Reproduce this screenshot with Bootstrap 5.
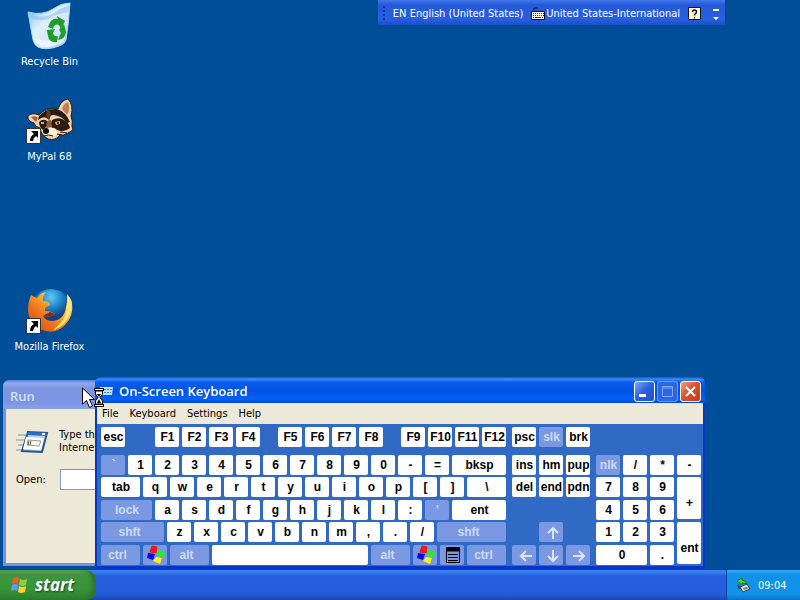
<!DOCTYPE html>
<html lang="en">
<head>
    <meta charset="UTF-8">
    <meta name="viewport" content="width=device-width, initial-scale=1.0">
    <title>Desktop</title>
    <link href="https://cdn.jsdelivr.net/npm/bootstrap@5.3.0/dist/css/bootstrap.min.css" rel="stylesheet">
    <style>
        body {
            background: #004e98;
            color: #000;
            font: 11px/13px "DejaVu Sans Condensed", "Noto Sans", sans-serif;
        }
        button { font: inherit; border: 0; padding: 0; }

        /* desktop */
        .shortcuts { width: 99px; padding-top: 2px; }
        .shortcut { height: 95px; color: #fff; gap: 5px; }
        .shortcut.skip-slot { margin-top: 95px; }
        .shortcut svg { width: 48px; height: 48px; }

        /* language bar */
        .langbar {
            top: 0; right: 75px; height: 25px; color: #fff; padding: 2px 5px 0 4px;
            background: linear-gradient(#3f78ea, #2458d8 20%, #2660e2 75%, #1c4fc4);
        }
        .langbar button { background: none; color: #fff; white-space: nowrap; }
        .grip { width: 4px; height: 17px; margin-right: 7px; background: radial-gradient(circle, #0d3aa8 1px, transparent 1px) 0 0 / 4px 4px; }
        .lang-layout { margin-left: 7px; }
        .lang-help { margin: 0 10px 0 8px; }

        /* windows */
        .win { border: 2px solid #0a3fd6; border-top: 0; border-radius: 7px 7px 0 0; }
        .titlebar { color: #fff; font: 600 13px/16px "Open Sans", sans-serif; border-radius: 6px 6px 0 0; }
        .run-win { left: 3px; top: 380px; width: 347px; border-width: 0 3px 3px; border-color: #7a8fdc; }
        .run-win .titlebar { height: 29px; margin: 0 -3px; padding: 3px 7px 0; color: #d5dffa; background: linear-gradient(#5d7fdc, #93a9ea 12%, #7b95e0 30%, #7c96e2 80%, #8ca2e8); }
        .run-body { height: 154px; background: #ece9d8; padding: 18px 10px 0; }
        .run-text { margin-left: 10px; }
        .run-row { margin-top: 14px; }
        .run-row label { width: 44px; }
        .run-row input { height: 21px; border: 1px solid #7f9db9; background: #fff; }

        .osk { left: 95px; top: 377px; border-color: #0837c8; border-bottom-width: 3px; }
        .osk .titlebar {
            height: 26px; margin: 0 -2px; padding: 2px 4px 0; gap: 6px;
            background: linear-gradient(#1050c8, #3a8bff 8%, #0a5cee 20%, #0053e1 55%, #0362fb 85%, #0048cc);
        }
        .caption-btns { gap: 2px; }
        .caption-btn { width: 21px; height: 21px; border: 1px solid #fff; border-radius: 3px; background: linear-gradient(135deg, #7fa2f4, #2a5fe0 50%, #1f4fd0); }
        .caption-btn.is-close { background: linear-gradient(135deg, #f0a088, #e0512c 45%, #c63a18); }
        .caption-btn:disabled { border-color: #6f9bf3; background: #2c66e6; }
        .menubar { height: 21px; background: #ece9d8; padding: 0 5px; gap: 11px; }
        .menubar button { background: none; }

        /* keys */
        .board { background: #316ac5; padding: 3px 2px 1px 4px; gap: 6px; }
        .cluster { grid-template-rows: 28px 22px 23px 22px 23px 20px; column-gap: 3px; align-items: start; }
        .cluster.three { grid-template-columns: repeat(3, 24px); }
        .cluster.four { grid-template-columns: repeat(4, 24px); }
        .key-row { gap: 3px; }
        .key {
            width: 24px; height: 20px; padding-left: 1px; border-radius: 2px; background: #fff; color: #000; white-space: nowrap;
            font: bold 12px/21px "Liberation Sans", Arial, sans-serif;
        }
        .key.mod { background: #7b98e2; color: #cddcfa; }
        .w39 { width: 39px; }
        .w51 { width: 51px; }
        .w54 { width: 54px; }
        .w63 { width: 63px; }
        .w69 { width: 69px; }
        .w156 { width: 156px; }
        .key.mod.w39, .key.mod.w63, .key.mod.w69 { padding: 0 6px 0 0; }
        .tall { height: 42px; line-height: 52px; }
        .after-esc { margin-left: 27px; }
        .after-group { margin-left: 15px; }

        .pointer { left: 82px; top: 387px; pointer-events: none; }

        /* taskbar */
        .taskbar { height: 30px; background: linear-gradient(#3f7ff0, #3a80f0 6%, #2560dc 20%, #245edb 80%, #1a46ae); }
        .start-btn {
            width: 96px; padding-left: 10px; gap: 6px; color: #fff; border-radius: 0 10px 10px 0;
            font: italic bold 17px/22px "Noto Sans", sans-serif; text-shadow: 1px 1px 2px #1c4a14;
            background: linear-gradient(#67b563, #3f9440 15%, #389539 60%, #2d7f2d);
            box-shadow: inset -4px 0 4px #2c7430;
        }
        .tray { width: 74px; padding-left: 9px; gap: 7px; color: #fff; border-left: 1px solid #0a3ea0; background: linear-gradient(#2cb0f5, #1290e8 15%, #1292ea 80%, #0d72c8); }
    </style>
</head>
<body>
    <div class="d-flex flex-column vh-100 overflow-hidden">
        <main class="position-relative flex-grow-1">
            <nav class="shortcuts d-flex flex-column">
                <a href="#" class="shortcut d-flex flex-column align-items-center text-decoration-none">
                    <svg viewBox="0 0 48 48">
                        <defs>
                            <linearGradient id="bin" x2="1" y2="1"><stop offset="0" stop-color="#6fb4ee"/><stop offset=".4" stop-color="#dff1fc"/><stop offset=".7" stop-color="#cfe6f8"/><stop offset="1" stop-color="#7fb0e2"/></linearGradient>
                        </defs>
                        <path d="M2 10Q16 14 27 7Q35 1 44 1Q43 19 40 38Q39 42 33 44Q19 49 12 45Q8 43 7 38Z" fill="url(#bin)" stroke="#a9d7f6"/>
                        <path d="M4 12Q16 18 28 11Q36 5 43 4L42 10Q30 12 22 17Q12 20 5 16Z" fill="#8cc4f2" opacity=".6"/>
                        <path d="M8 36Q20 42 39 35L38 40Q22 48 11 43Z" fill="#fff" opacity=".6"/>
                        <g fill="#239b2b">
                            <path d="M22 25Q25 15 32 17L31 14L39 19L35 27L33 23Q28 21 27 27Z"/>
                            <path d="M38 22L40 30Q39 37 32 38L34 33Q36 31 33 28Z"/>
                            <path d="M21 28L29 27L27 31Q28 35 32 34L31 40Q23 41 22 34Z"/>
                        </g>
                    </svg>
                    <span>Recycle Bin</span>
                </a>
                <a href="#" class="shortcut d-flex flex-column align-items-center text-decoration-none">
                    <svg viewBox="0 0 48 48">
                        <path d="M2 19Q6 15 13 18Q20 10 32 12Q35 3 42 2Q48 8 45 19Q47 24 46 29L47 33L42 36Q37 39 34 38Q30 44 22 42Q15 38 14 31Q9 30 8 26Q1 24 2 19Z" fill="#f4d3ac" stroke="#2a1a10"/>
                        <path d="M36 12Q37 7 42 5Q45 12 41 18Z" fill="#b98258"/>
                        <path d="M5 20Q9 18 12 21L10 25Z" fill="#9a6640"/>
                        <path d="M13 19Q20 11 31 12Q40 15 44 25L41 26Q36 19 28 18Q23 18 22 22Q18 18 12 23Z" fill="#2b1b12"/>
                        <path d="M21 13Q24 12 25 18L23 24L20 18Z" fill="#5a3a26"/>
                        <path d="M26 23Q31 20 36 22Q43 25 44 31Q38 36 31 33Q28 30 26 31Q24 27 26 23Z" fill="#2e1c12"/>
                        <path d="M13 25Q17 21 21 24L21 29L17 33Q13 30 13 25Z" fill="#2e1c12"/>
                        <path d="M21 24L25 23L26 30L20 31Z" fill="#8c5c38"/>
                        <path d="M21 32Q28 29 32 36Q28 41 20 38Z" fill="#fff1dc"/>
                        <ellipse cx="20" cy="34" rx="3" ry="3" fill="#111"/>
                        <path d="M29 25L34 24L34 27L30 28ZM15 25H18V27H15Z" fill="#d4a878"/>
                        <circle cx="32" cy="26" r="1" fill="#111"/>
                        <path d="M31 37L36 38M34 35L41 36M18 39Q22 37 27 39" stroke="#2a1a10" fill="none"/>
                        <path d="M.500 31.500H14.500V46.500H.500Z" fill="#fff" stroke="#333"/>
                        <path d="M5 34H12V41L10 39Q7 41 7 44H4Q4 39 8 37Z"/>
                    </svg>
                    <span>MyPal 68</span>
                </a>
                <a href="#" class="shortcut skip-slot d-flex flex-column align-items-center text-decoration-none">
                    <svg viewBox="0 0 48 48">
                        <defs>
                            <radialGradient id="globe" cx=".5" cy=".2"><stop offset="0" stop-color="#5ecaf4"/><stop offset=".6" stop-color="#1b7cc4"/><stop offset="1" stop-color="#16427e"/></radialGradient>
                            <linearGradient id="tail" x1="1" y1="0" x2="0" y2="1"><stop offset="0" stop-color="#fff3a0"/><stop offset=".3" stop-color="#ffc23c"/><stop offset=".6" stop-color="#f27a1c"/><stop offset="1" stop-color="#cf3a16"/></linearGradient>
                        </defs>
                        <circle cx="25" cy="22" r="20" fill="url(#globe)"/>
                        <path d="M5 8Q2 15 2 24Q4 39 16 43Q29 48 39 38Q48 29 46 15Q44 10 41 7Q42 14 40 20Q38 33 27 34Q19 34 17 29Q23 31 29 27Q25 24 19 24Q18 20 24 18Q24 14 17 14Q16 10 20 5Q15 5 11 11Q8 10 5 8Z" fill="url(#tail)"/>
                        <path d="M41 8Q49 20 42 31Q36 41 27 43Q37 36 40 26Q42 19 41 8Z" fill="#ffe477"/>
                        <path d="M17 29Q23 31 29 27L24 25L20 27Z" fill="#7b2b18"/>
                        <path d="M.500 31.500H14.500V46.500H.500Z" fill="#fff" stroke="#333"/>
                        <path d="M5 34H12V41L10 39Q7 41 7 44H4Q4 39 8 37Z"/>
                    </svg>
                    <span>Mozilla Firefox</span>
                </a>
            </nav>

            <div class="langbar position-absolute d-flex align-items-center">
                <span class="grip"></span>
                <button type="button">EN English (United States)</button>
                <button type="button" class="lang-layout d-flex align-items-center">
                    <svg width="16" height="14"><path d="M4 3V1H8" stroke="#111" fill="none"/><path d="M1.500 4.500H14.500V12.500H1.500Z" fill="#fff" stroke="#111"/><path d="M3 6.500H14M3 8.500H14" stroke="#333" stroke-dasharray="1 1"/><path d="M3 10.500H13" stroke="#333" stroke-dasharray="1 1 6 1"/></svg>
                    United States-International
                </button>
                <button type="button" class="lang-help" aria-label="Help">
                    <svg class="d-block" width="14" height="14"><path d="M.500.500H12.500V12.500H.500Z" fill="#fffbd8" stroke="#111"/><path d="M4.500 5Q4.500 3 6.500 3T8.500 5Q8.500 6 6.500 7.500V8.500M6.500 10V11.500" stroke="#111" stroke-width="1.500" fill="none"/></svg>
                </button>
                <button type="button" aria-label="Options">
                    <svg class="d-block" width="8" height="14"><path d="M1 2H7V4H1ZM1 10H7L4 13Z" fill="#fff"/></svg>
                </button>
            </div>

            <section class="win run-win position-absolute">
                <div class="titlebar d-flex align-items-center">Run</div>
                <div class="run-body">
                    <div class="d-flex align-items-center">
                        <svg width="33" height="28">
                            <path d="M2 8H11M0 13H9M2 18H8M0 23H6" stroke="#8492ac"/>
                            <path d="M12 5L31 6L26 25L6 24Z" fill="#bad1ee" stroke="#26568f" stroke-width="2"/>
                            <path d="M12 5L31 6L30 9L11 8Z" fill="#2d6fc7"/>
                            <path d="M10 10L28 11L25 23L7 22Z" fill="#fff"/>
                            <path d="M12 13L25 14L23 19L11 18Z" fill="#f7f7f3" stroke="#999"/>
                            <path d="M13 14L12 18M15 14L14 18" stroke="#555"/>
                            <path d="M26 7H29" stroke="#fff" stroke-width="2"/>
                        </svg>
                        <div class="run-text">Type the<br>Internet</div>
                    </div>
                    <div class="run-row d-flex align-items-center">
                        <label for="run-open">Open:</label>
                        <input id="run-open" type="text" class="flex-grow-1">
                    </div>
                </div>
            </section>

            <section class="win osk position-absolute">
                <div class="titlebar d-flex align-items-center">
                    <svg width="14" height="12"><path d="M1 2H14L13 10H0Z" fill="#bfe2ff"/><path d="M2 4.500H13M2 7.500H12" stroke="#3987da" stroke-dasharray="2 1"/></svg>
                    <span class="flex-grow-1">On-Screen Keyboard</span>
                    <div class="caption-btns d-flex">
                        <button type="button" class="caption-btn" aria-label="Minimize"><svg class="d-block" width="19" height="19"><path d="M4 12H11V15H4Z" fill="#fff"/></svg></button>
                        <button type="button" class="caption-btn" aria-label="Maximize" disabled><svg class="d-block" width="19" height="19"><path d="M4.500 4.500H14.500V14.500H4.500ZM4.500 6H14.500" fill="none" stroke="#7fa8f5"/></svg></button>
                        <button type="button" class="caption-btn is-close" aria-label="Close"><svg class="d-block" width="19" height="19"><path d="M5 5L14 14M14 5L5 14" stroke="#fff" stroke-width="2"/></svg></button>
                    </div>
                </div>
                <div class="menubar d-flex align-items-center">
                    <button type="button">File</button>
                    <button type="button">Keyboard</button>
                    <button type="button">Settings</button>
                    <button type="button">Help</button>
                </div>
                <div class="board d-flex">
                    <div class="cluster d-grid" id="main-keys"></div>
                    <div class="cluster three d-grid" id="nav-keys"></div>
                    <div class="cluster four d-grid" id="num-keys"></div>
                </div>
            </section>

            <svg class="pointer position-absolute" width="24" height="24">
                <path d="M.500 1V17L4.500 13.500L7.500 20.500L10.500 19L7.500 12.500H12.500Z" fill="#fff" stroke="#000"/>
                <path d="M12 2.500H22M12 18.500H22" stroke="#000" stroke-width="3"/>
                <path d="M13 2.500H21M13 18.500H21" stroke="#fff"/>
                <path d="M13.500 4V7L16 10.500L13.500 14V17H20.500V14L18 10.500L20.500 7V4Z" fill="#fff" stroke="#000"/>
                <path d="M15 7H19L17 10ZM17 12L19 16H15Z"/>
            </svg>
        </main>

        <footer class="taskbar d-flex justify-content-between">
            <button type="button" class="start-btn d-flex align-items-center">
                <svg width="19" height="18">
                    <path d="M3 2Q6 0 9 2L8 8Q5 6 2 8Z" fill="#ee5a2b"/>
                    <path d="M10 3Q14 5 17 3L16 9Q13 11 9 9Z" fill="#8bd041"/>
                    <path d="M2 9Q5 7 8 9L7 15Q4 13 1 15Z" fill="#5d9cf4"/>
                    <path d="M9 10Q12 12 16 10L15 16Q11 18 8 16Z" fill="#fbd136"/>
                </svg>
                start
            </button>
            <div class="tray d-flex align-items-center">
                <svg width="15" height="16">
                    <path d="M4 10L11 7L14 12L7 15Z" fill="#d9dde1" stroke="#3b4650"/>
                    <path d="M7 11L11 9.500L12 12L8 13Z" fill="#7f8b94"/>
                    <path d="M1 4L6 1V3Q10 3 11 7L8 6Q7 6 6 6V8Z" fill="#4fd23b" stroke="#16761b"/>
                    <path d="M2 8L4 12" stroke="#33414d" stroke-width="2"/>
                </svg>
                <span>09:04</span>
            </div>
        </footer>
    </div>

    <script src="https://cdn.jsdelivr.net/npm/bootstrap@5.3.0/dist/js/bootstrap.bundle.min.js"></script>
    <script>
        const flag = `<svg width="20" height="20"><path d="M6 1L11 2L10 8L4 7Z" fill="#f01818" stroke="#f01818" stroke-linejoin="round"/><path d="M12 5L19 7L17 12L11 11Z" fill="#20f020"/><path d="M2 8L9 9L7 15L1 13Z" fill="#0808e0"/><path d="M10 12L16 13L14 19L7 16Z" fill="#fff010"/></svg>`;
        const menu = `<svg width="14" height="16"><path d="M.500.500H13.500V15.500H.500Z" fill="#7b98e2" stroke="#000"/><path d="M2 7.500H12M2 10.500H12M2 13.500H12" stroke="#000"/><path d="M1 2.500H13" stroke="#000" stroke-width="4"/></svg>`;
        const arrow = d => `<svg width="18" height="16"><path d="${d}" fill="none" stroke="#dbe6fd" stroke-width="2"/></svg>`;

        // each key is [label, extra classes, aria name]
        const plain = keys => keys.split(' ').map(k => [k, '']);
        const mainRows = [
            [['esc', ''], ['F1', 'after-esc'], ...plain('F2 F3 F4'), ['F5', 'after-group'], ...plain('F6 F7 F8'), ['F9', 'after-group'], ...plain('F10 F11 F12')],
            [['`', 'mod'], ...plain('1 2 3 4 5 6 7 8 9 0 - ='), ['bksp', 'w54']],
            [['tab', 'w39'], ...plain('q w e r t y u i o p [ ]'), ['\\', 'w39']],
            [['lock', 'mod w51'], ...plain('a s d f g h j k l :'), ["'", 'mod'], ['ent', 'w54']],
            [['shft', 'mod w63'], ...plain('z x c v b n m , . /'), ['shft', 'mod w69']],
            [['ctrl', 'mod w39'], [flag, 'mod', 'Windows'], ['alt', 'mod w39'], ['', 'w156', 'Space'], ['alt', 'mod w39'], [flag, 'mod', 'Windows'], [menu, 'mod', 'Menu'], ['ctrl', 'mod w39']]
        ];

        // [label, extra classes, grid row, grid column, aria name]
        const navKeys = [
            ['psc', '', 1, 1], ['slk', 'mod', 1, 2], ['brk', '', 1, 3],
            ['ins', '', 2, 1], ['hm', '', 2, 2], ['pup', '', 2, 3],
            ['del', '', 3, 1], ['end', '', 3, 2], ['pdn', '', 3, 3],
            [arrow('M10 15V4M5 9L10 4L15 9'), 'mod', 5, 2, 'Up'],
            [arrow('M16 9H5M10 4L5 9L10 14'), 'mod', 6, 1, 'Left'],
            [arrow('M10 3V14M5 9L10 14L15 9'), 'mod', 6, 2, 'Down'],
            [arrow('M3 9H14M9 4L14 9L9 14'), 'mod', 6, 3, 'Right']
        ];
        const numKeys = [
            ['nlk', 'mod', 2, 1], ['/', '', 2, 2], ['*', '', 2, 3], ['-', '', 2, 4],
            ['7', '', 3, 1], ['8', '', 3, 2], ['9', '', 3, 3], ['+', 'tall', '3 / span 2', 4],
            ['4', '', 4, 1], ['5', '', 4, 2], ['6', '', 4, 3],
            ['1', '', 5, 1], ['2', '', 5, 2], ['3', '', 5, 3], ['ent', 'tall', '5 / span 2', 4],
            ['0', 'w51', 6, '1 / span 2'], ['.', '', 6, 3]
        ];

        function makeKey(label, classes, name) {
            const key = document.createElement('button');
            key.type = 'button';
            key.className = `key d-flex justify-content-center ${classes}`;
            if (label.startsWith('<svg')) key.classList.add('align-items-center');
            if (name) key.setAttribute('aria-label', name);
            key.innerHTML = label;
            return key;
        }

        mainRows.forEach(row => {
            const div = document.createElement('div');
            div.className = 'key-row d-flex';
            row.forEach(([label, classes, name]) => div.appendChild(makeKey(label, classes, name)));
            document.getElementById('main-keys').appendChild(div);
        });

        function fillGrid(id, keys) {
            keys.forEach(([label, classes, row, column, name]) => {
                const key = makeKey(label, classes, name);
                key.style.gridRow = row;
                key.style.gridColumn = column;
                document.getElementById(id).appendChild(key);
            });
        }

        fillGrid('nav-keys', navKeys);
        fillGrid('num-keys', numKeys);
    </script>
</body>
</html>
